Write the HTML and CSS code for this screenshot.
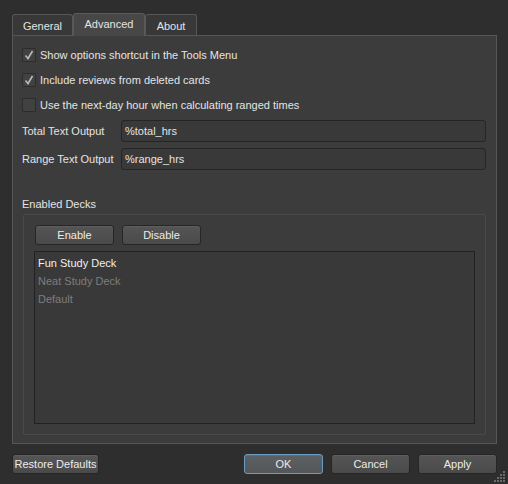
FILE: index.html
```html
<!DOCTYPE html>
<html>
<head>
<meta charset="utf-8">
<link rel="stylesheet" href="styles.css">
</head>
<body>
<div class="window">
  <div class="tabs">
    <div class="tab tab-general">General</div>
    <div class="tab tab-advanced active">Advanced</div>
    <div class="tab tab-about">About</div>
  </div>
  <div class="panel">
    <div class="check-row">
      <span class="checkbox"><svg width="12" height="12" viewBox="0 0 12 12"><path d="M2.5 6.5 L5 9.5 L9.5 2" fill="none" stroke="#b9b9b9" stroke-width="1.6"/></svg></span>
      <span class="check-label">Show options shortcut in the Tools Menu</span>
    </div>
    <div class="check-row">
      <span class="checkbox"><svg width="12" height="12" viewBox="0 0 12 12"><path d="M2.5 6.5 L5 9.5 L9.5 2" fill="none" stroke="#b9b9b9" stroke-width="1.6"/></svg></span>
      <span class="check-label">Include reviews from deleted cards</span>
    </div>
    <div class="check-row">
      <span class="checkbox"></span>
      <span class="check-label">Use the next-day hour when calculating ranged times</span>
    </div>
    <div class="field-row">
      <span class="field-label">Total Text Output</span>
      <div class="input">%total_hrs</div>
    </div>
    <div class="field-row">
      <span class="field-label">Range Text Output</span>
      <div class="input">%range_hrs</div>
    </div>
    <div class="group-title">Enabled Decks</div>
    <div class="group">
      <div class="group-buttons">
        <div class="btn btn-small">Enable</div>
        <div class="btn btn-small">Disable</div>
      </div>
      <div class="list">
        <div class="list-item">Fun Study Deck</div>
        <div class="list-item disabled">Neat Study Deck</div>
        <div class="list-item disabled">Default</div>
      </div>
    </div>
  </div>
  <div class="footer">
    <div class="btn btn-restore">Restore Defaults</div>
    <div class="footer-right">
      <div class="btn btn-small btn-default">OK</div>
      <div class="btn btn-small">Cancel</div>
      <div class="btn btn-small">Apply</div>
    </div>
  </div>
</div>
<svg class="grip" width="12" height="12" viewBox="0 0 12 12">
  <g fill="#6a6a6a">
    <rect x="9" y="0" width="2" height="2"/>
    <rect x="6" y="3" width="2" height="2"/><rect x="9" y="3" width="2" height="2"/>
    <rect x="3" y="6" width="2" height="2"/><rect x="6" y="6" width="2" height="2"/><rect x="9" y="6" width="2" height="2"/>
    <rect x="0" y="9" width="2" height="2"/><rect x="3" y="9" width="2" height="2"/><rect x="6" y="9" width="2" height="2"/><rect x="9" y="9" width="2" height="2"/>
  </g>
</svg>
</body>
</html>
```

FILE: styles.css
```css
html, body {
  margin: 0;
  padding: 0;
}
body {
  width: 508px;
  height: 484px;
  background: #2e2e2f;
  font-family: "Liberation Sans", Arial, sans-serif;
  font-size: 11px;
  color: #e4e4e4;
  position: relative;
  overflow: hidden;
  white-space: nowrap;
}
.window {
  padding: 12px 0 0 12px;
  width: 485px;
}
.tabs {
  display: flex;
  align-items: flex-end;
  height: 23px;
}
.tab {
  box-sizing: border-box;
  height: 21px;
  border: 1px solid #565656;
  border-bottom: none;
  border-radius: 3px 3px 0 0;
  background: #383838;
  display: flex;
  align-items: center;
  justify-content: center;
  padding-top: 1px;
}
.tab-general { width: 61px; }
.tab-advanced { width: 72px; }
.tab-about { width: 52px; }
.tab.active {
  height: 23px;
  background: #474747;
  padding-top: 0;
  padding-bottom: 2px;
  margin-bottom: -1px;
  position: relative;
  z-index: 1;
  border-color: #5a5a5a;
}
.panel {
  box-sizing: border-box;
  height: 409px;
  border: 1px solid #565656;
  background: #3c3c3c;
  padding: 6px 10px 0 9px;
  display: flex;
  flex-direction: column;
}
.check-row {
  height: 25px;
  display: flex;
  align-items: center;
}
.checkbox {
  box-sizing: border-box;
  flex-shrink: 0;
  width: 14px;
  height: 14px;
  border: 1px solid #2c2c2c;
  background: #414141;
  border-radius: 1px;
  display: flex;
  align-items: center;
  justify-content: center;
  margin-right: 4px;
}
.field-row {
  height: 28px;
  display: flex;
  align-items: center;
}
.field-label {
  width: 99px;
  flex-shrink: 0;
}
.input {
  box-sizing: border-box;
  width: 366px;
  height: 22px;
  border: 1px solid #252525;
  border-radius: 3px;
  background: #393939;
  display: flex;
  align-items: center;
  padding-left: 3px;
}
.group-title {
  margin-top: 24px;
  height: 14px;
  line-height: 14px;
}
.group {
  box-sizing: border-box;
  margin-top: 3px;
  margin-left: 1px;
  width: 463px;
  height: 221px;
  border: 1px solid #4a4a4a;
  border-radius: 2px;
  padding: 10px 10px 10px 10px;
  display: flex;
  flex-direction: column;
}
.group-buttons {
  display: flex;
  gap: 8px;
  padding-left: 1px;
}
.btn {
  box-sizing: border-box;
  flex-shrink: 0;
  height: 20px;
  border: 1px solid #262626;
  border-radius: 3px;
  background: linear-gradient(#555555, #4a4a4a);
  box-shadow: inset 0 1px 0 #5e5e5e;
  display: flex;
  align-items: center;
  justify-content: center;
  color: #ececec;
}
.btn-small { width: 79px; }
.list {
  box-sizing: border-box;
  margin-top: 6px;
  flex: 1;
  border: 1px solid #222222;
  background: #393939;
  padding: 2px 0 0 3px;
}
.list-item {
  height: 18px;
  line-height: 18px;
  color: #f0f0f0;
}
.list-item.disabled {
  color: #7d7d7d;
}
.footer {
  margin-top: 10px;
  display: flex;
  justify-content: space-between;
}
.btn-restore {
  width: 87px;
}
.footer-right {
  display: flex;
  gap: 8px;
}
.btn-default {
  border-color: #6a9bc0;
  background: linear-gradient(#5c6063, #53575a);
  box-shadow: inset 0 1px 0 #666a6d;
}
.grip {
  position: absolute;
  right: 2px;
  bottom: 1px;
}
```
